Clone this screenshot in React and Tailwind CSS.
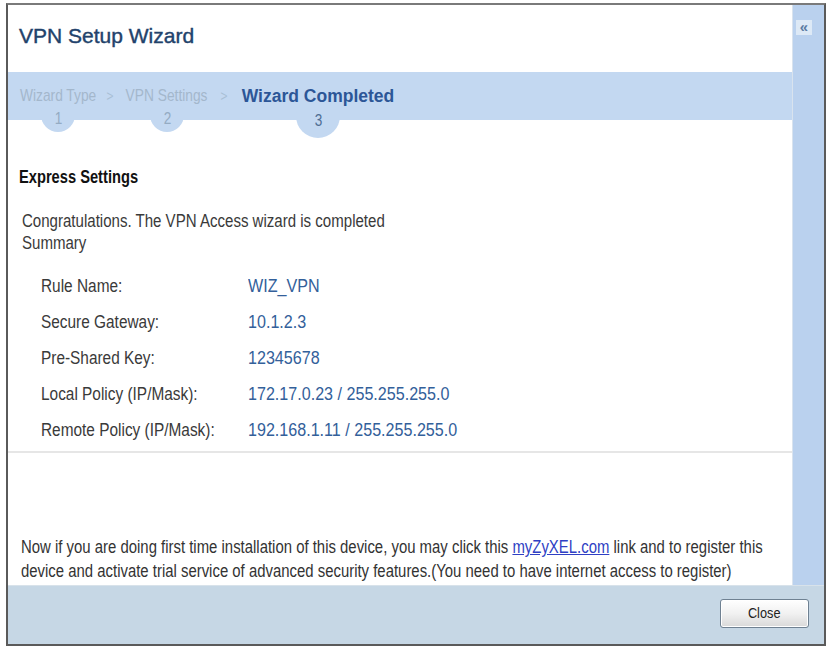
import React from "react";

const sans = { fontFamily: '"Liberation Sans", Arial, sans-serif' };

function Step({ label, num, active, big, w }) {
  return (
    <div className={"relative flex flex-col items-center shrink-0 " + w}>
      <div
        className={
          big
            ? "absolute left-1/2 -translate-x-1/2 top-[10px] w-[44px] h-[44px] rounded-full bg-[#c3d8f1]"
            : "absolute left-1/2 -translate-x-1/2 top-[14px] w-[34px] h-[34px] rounded-full bg-[#c3d8f1]"
        }
      />
      {active ? (
        <div className="relative h-[24px] leading-[24px] text-[17.5px] font-bold text-[#2c5697] whitespace-nowrap">
          {label}
        </div>
      ) : (
        <div className="relative h-[24px] leading-[24px] text-[17px] text-[#a3b7cc] whitespace-nowrap scale-x-[0.81] origin-center">
          {label}
        </div>
      )}
      <div
        className={
          active
            ? "relative h-[20px] leading-[20px] mt-[3px] text-[16px] text-[#4f6e94] scale-x-[0.85]"
            : "relative h-[20px] leading-[20px] mt-[1px] text-[16px] text-[#94abc3] scale-x-[0.85]"
        }
      >
        {num}
      </div>
    </div>
  );
}

function Arrow() {
  return (
    <div className="w-[16px] shrink-0 text-center h-[24px] leading-[24px] text-[15px] text-[#a9bfd5] scale-x-[0.8]">
      &gt;
    </div>
  );
}

function Row({ label, value }) {
  return (
    <div className="flex h-[22px] leading-[22px]">
      <div className="w-[207px] shrink-0">
        <span className="inline-block whitespace-nowrap origin-left scale-x-[0.88] text-[#3a3a3a]">{label}</span>
      </div>
      <div>
        <span className="inline-block whitespace-nowrap origin-left scale-x-[0.92] text-[#33609a]">{value}</span>
      </div>
    </div>
  );
}

export default function App() {
  return (
    <div className="w-[829px] h-[648px] bg-white pt-[3px] pl-[6px] overflow-hidden" style={sans}>
      <div className="w-[820px] h-[643px] border-2 border-[#5a5a5a] border-t-[#7a7a7a] flex flex-col bg-white">
        <div className="flex flex-1 min-h-0">
          {/* main */}
          <div className="flex-1 min-w-0 flex flex-col bg-white border-r border-[#d9e3ee] overflow-hidden">
            <div className="h-[67px] shrink-0 flex items-center pl-[11px] pb-[6px]">
              <div className="text-[21px] text-[#22426b] [-webkit-text-stroke:0.4px_#22426b]">
                VPN Setup Wizard
              </div>
            </div>
            <div className="h-[48px] shrink-0 bg-[#c3d8f1] flex items-start pl-[6px] pt-[12px]">
              <Step label="Wizard Type" num="1" w="w-[88px]" />
              <Arrow />
              <Step label="VPN Settings" num="2" w="w-[98px]" />
              <Arrow />
              <Step label="Wizard Completed" num="3" active big w="w-[172px]" />
            </div>
            <div className="flex-1 flex flex-col text-[17.5px] text-[#3a3a3a]">
              <div className="pl-[11px] pt-[44px] shrink-0">
                <span className="inline-block h-[22px] leading-[22px] text-[18px] font-bold text-[#111] whitespace-nowrap origin-left scale-x-[0.815]">
                  Express Settings
                </span>
              </div>
              <div className="pl-[14px] mt-[20px] leading-[22px] shrink-0">
                <div>
                  <span className="inline-block whitespace-nowrap origin-left scale-x-[0.86]">
                    Congratulations. The VPN Access wizard is completed
                  </span>
                </div>
                <div>
                  <span className="inline-block whitespace-nowrap origin-left scale-x-[0.86]">Summary</span>
                </div>
              </div>
              <div className="pl-[33px] mt-[21px] flex flex-col gap-[14px] shrink-0">
                <Row label="Rule Name:" value="WIZ_VPN" />
                <Row label="Secure Gateway:" value="10.1.2.3" />
                <Row label="Pre-Shared Key:" value="12345678" />
                <Row label="Local Policy (IP/Mask):" value="172.17.0.23 / 255.255.255.0" />
                <Row label="Remote Policy (IP/Mask):" value="192.168.1.11 / 255.255.255.0" />
              </div>
              <div className="mt-[10px] h-[2px] shrink-0 bg-[#e6e6e6]" />
              <div className="pl-[13px] mt-[82px] leading-[24px] text-[17.5px] text-[#333] shrink-0">
                <div>
                  <span className="inline-block whitespace-nowrap origin-left scale-x-[0.852]">
                    Now if you are doing first time installation of this device, you may click this{" "}
                    <span className="text-[#2f3fc4] underline">myZyXEL.com</span> link and to register this
                  </span>
                </div>
                <div>
                  <span className="inline-block whitespace-nowrap origin-left scale-x-[0.852]">
                    device and activate trial service of advanced security features.(You need to have internet access to register)
                  </span>
                </div>
              </div>
            </div>
          </div>
          {/* sidebar */}
          <div className="w-[31px] shrink-0 bg-[#bad1ee] flex justify-start pl-[3px] pt-[15px]">
            <div className="w-[16px] h-[15px] bg-[#dde9f6] flex items-center justify-center text-[15px] leading-none text-[#5b7ba3] font-bold pb-[2px]">
              «
            </div>
          </div>
        </div>
        {/* footer */}
        <div className="h-[59px] shrink-0 bg-[#c6d7e5] flex items-start justify-end pr-[15px] pt-[13px] border-t border-[#d8e2ea]">
          <button className="w-[89px] h-[29px] rounded-[3px] border border-[#6f8192] bg-gradient-to-b from-white via-[#f1f1f1] to-[#d9d9d9] text-[15px] text-[#222] shadow-[inset_0_0_0_1px_#ffffff]">
            <span className="inline-block scale-x-[0.85]">Close</span>
          </button>
        </div>
      </div>
    </div>
  );
}
